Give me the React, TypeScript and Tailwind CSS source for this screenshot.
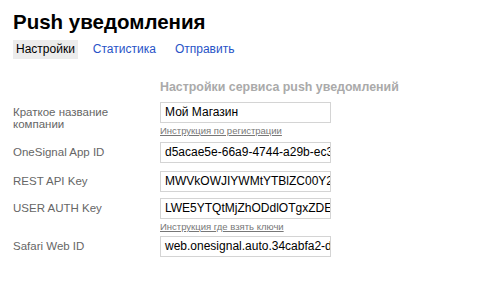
import React from 'react';

const font = { fontFamily: '"Liberation Sans", Arial, sans-serif' };

interface RowProps {
    label: React.ReactNode;
    value: string;
    hint?: string;
    className?: string;
}

const Row: React.FC<RowProps> = ({ label, value, hint, className }) => (
    <div className={`flex ${className ?? ''}`}>
        <div className="w-[147px] shrink-0 pt-[4px] text-[11.5px] leading-[12px] text-[#666]">{label}</div>
        <div className="flex flex-col">
            <div className="w-[171px] h-[21px] border border-[#d4d4d4] bg-white px-[4px] text-[12px] leading-[19px] text-black overflow-hidden whitespace-nowrap">
                {value}
            </div>
            {hint && (
                <a className="mt-[2px] text-[9.5px] leading-[11px] text-[#777] underline">{hint}</a>
            )}
        </div>
    </div>
);

export default function App() {
    return (
        <div className="w-[480px] h-[284px] bg-white px-[13px] pt-[9px] overflow-hidden" style={font}>
            <h1 className="text-[20.5px] leading-[26px] font-bold text-black">Push уведомления</h1>
            <div className="flex items-center mt-[5px] text-[12px] leading-[19px]">
                <span className="bg-[#ececec] px-[3px] text-black">Настройки</span>
                <span className="ml-[15px] text-[#2853c7]">Статистика</span>
                <span className="ml-[19px] text-[#2853c7]">Отправить</span>
            </div>
            <div className="ml-[147px] mt-[21px] text-[12.4px] leading-[15px] font-bold text-[#aaa]">
                Настройки сервиса push уведомлений
            </div>
            <Row className="mt-[7px]" label={<>Краткое название<br />компании</>} value="Мой Магазин" hint="Инструкция по регистрации" />
            <Row className="mt-[6px]" label="OneSignal App ID" value="d5acae5e-66a9-4744-a29b-ec3" />
            <Row className="mt-[8px]" label="REST API Key" value="MWVkOWJIYWMtYTBlZC00Y2I5" />
            <Row className="mt-[6px]" label="USER AUTH Key" value="LWE5YTQtMjZhODdlOTgxZDEz" hint="Инструкция где взять ключи" />
            <Row className="mt-[4px]" label="Safari Web ID" value="web.onesignal.auto.34cabfa2-de" />
        </div>
    );
}
